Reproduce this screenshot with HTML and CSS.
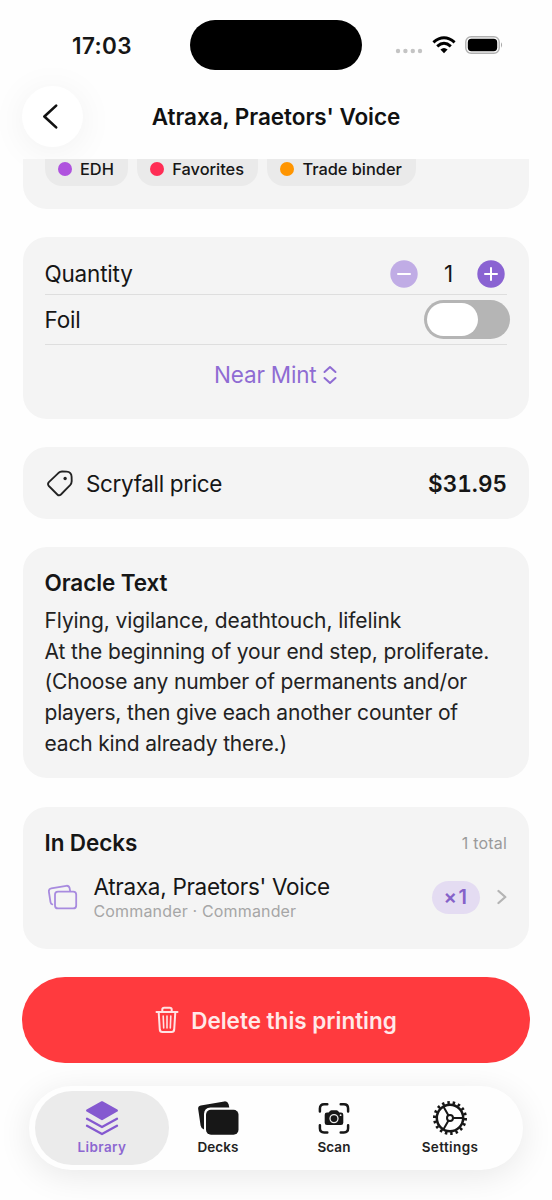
FILE: index.html
```html
<!DOCTYPE html>
<html lang="en">
<head>
<meta charset="utf-8">
<title>Atraxa, Praetors' Voice</title>
<link rel="stylesheet" href="styles.css">
</head>
<body>
<div class="screen">
  <header class="top">
    <div class="status">
      <span class="time">17:03</span>
      <span class="island"></span>
      <div class="indicators">
        <svg class="signal" width="28" height="6" viewBox="0 0 28 6" fill="#c4c4c4"><circle cx="3" cy="3" r="2.2"/><circle cx="10.4" cy="3" r="2.2"/><circle cx="17.8" cy="3" r="2.2"/><circle cx="25" cy="3" r="2.2"/></svg>
        <svg class="wifi" width="24" height="18" viewBox="0 0 24 18" fill="none" stroke="#000" stroke-width="3"><path d="M1.4 6.3Q12 -2.9 22.6 6.3"/><path d="M5.2 10.3Q12 4.3 18.8 10.3"/><path d="M8.4 13.6Q12 10.6 15.6 13.6L12 17.2Z" fill="#000" stroke="none"/></svg>
        <svg class="battery" width="38" height="18" viewBox="0 0 38 18"><rect x=".8" y=".8" width="33.4" height="16.4" rx="5.3" fill="none" stroke="#b0b0b0" stroke-width="1.4"/><rect x="2.8" y="2.8" width="29.4" height="12.4" rx="3.6"/><path d="M36 6.3q2.2 2.7 0 5.4z" fill="#aaa"/></svg>
      </div>
    </div>
    <div class="nav">
      <button class="back" aria-label="Back"><svg width="17" height="27" viewBox="0 0 18 28" fill="none" stroke="#111" stroke-width="2.8" stroke-linecap="round" stroke-linejoin="round"><path d="M15 2.5L2.5 14L15 25.5"/></svg></button>
      <h1 class="title">Atraxa, Praetors' Voice</h1>
    </div>
  </header>

  <main class="content">
    <section class="card tags">
      <span class="tag"><i class="dot purple"></i><span>EDH</span></span>
      <span class="tag"><i class="dot pink"></i><span>Favorites</span></span>
      <span class="tag"><i class="dot orange"></i><span>Trade binder</span></span>
    </section>

    <section class="card options">
      <div class="row quantity">
        <span class="label">Quantity</span>
        <div class="stepper">
          <svg width="28" height="28" viewBox="0 0 28 28"><circle cx="14" cy="14" r="13.7" fill="#c0ace5"/><path d="M8 14h12" stroke="#fff" stroke-width="2" stroke-linecap="round"/></svg>
          <span class="count">1</span>
          <svg width="28" height="28" viewBox="0 0 28 28"><circle cx="14" cy="14" r="13.7" fill="#8a63d2"/><path d="M8 14h12M14 8v12" stroke="#fff" stroke-width="2" stroke-linecap="round"/></svg>
        </div>
      </div>
      <div class="row foil">
        <span class="label">Foil</span>
        <span class="switch"><i class="knob"></i></span>
      </div>
      <div class="condition">
        <span>Near Mint</span>
        <svg width="14" height="20" viewBox="0 0 14 20" fill="none" stroke="#8f6cd3" stroke-width="2" stroke-linecap="round" stroke-linejoin="round"><path d="M1.5 7L7 2L12.5 7M1.5 13L7 18L12.5 13"/></svg>
      </div>
    </section>

    <section class="card price">
      <svg width="26" height="27" viewBox="0 0 28 28" preserveAspectRatio="none" fill="none" stroke="#222" stroke-width="2" stroke-linejoin="round"><path d="M2 12.6L12.2 3.2Q14 1.7 16.2 1.6L21.2 1.7Q26.3 2 26.5 7L26.6 11.5Q26.5 14 24.9 15.7L15 25.4Q13 27.2 11.1 25.4L2 16.6Q0.2 14.6 2 12.6Z"/><circle cx="19.5" cy="8.8" r="1.8" fill="#222" stroke="none"/></svg>
      <span class="scry">Scryfall price</span>
      <span class="amount">$31.95</span>
    </section>

    <section class="card oracle">
      <h2 class="heading">Oracle Text</h2>
      <p class="rules"><span class="keywords">Flying, vigilance, deathtouch, lifelink</span><br>At the beginning of your end step, proliferate.<br><span class="reminder">(Choose any number of permanents and/or<br>players, then give each another counter of<br>each kind already there.)</span></p>
    </section>

    <section class="card decks">
      <div class="decks-head">
        <h2 class="heading">In Decks</h2>
        <span class="total">1 total</span>
      </div>
      <div class="deck">
        <svg class="deck-icon" width="32" height="28" viewBox="0 0 32 28" fill="none" stroke="#a88bdf" stroke-width="1.8" stroke-linecap="round" stroke-linejoin="round"><rect x="7" y="8.6" width="21.2" height="16.8" rx="3"/><path d="M4.300 21.4Q2.800 21.1 2.500 19.2L.9 8.8Q.5 5.9 3.200 5.400L18.300 2.8Q20.900 2.500 21.600 5.100L22.100 8.200"/></svg>
        <div class="deck-text">
          <span class="deck-name">Atraxa, Praetors' Voice</span>
          <span class="deck-sub">Commander · Commander</span>
        </div>
        <span class="badge">×1</span>
        <svg class="chev" width="10" height="16" viewBox="0 0 10 16" fill="none" stroke="#b4b4b4" stroke-width="2.3" stroke-linecap="round" stroke-linejoin="round"><path d="M1.5 2L8.3 8L1.5 14"/></svg>
      </div>
    </section>

    <button class="delete">
      <svg width="24" height="28" viewBox="0 0 24 28" fill="none" stroke="#ffe3e4" stroke-width="2" stroke-linecap="round" stroke-linejoin="round"><path d="M1.5 6H22.5M7.3 5.8V3.6Q7.3 1.8 9.2 1.8H14.8Q16.7 1.8 16.7 3.6V5.8M3.7 6.2L4.8 23.7Q5 26 7.3 26H16.7Q19 26 19.2 23.7L20.3 6.2"/><path d="M8.2 10L8.7 22M12 10V22M15.8 10L15.3 22" stroke-width="1.6"/></svg>
      <span>Delete this printing</span>
    </button>
  </main>

  <nav class="tabbar">
    <a class="tab active">
      <svg width="36" height="36" viewBox="0 0 36 36" fill="none" stroke="#8559d0" stroke-width="2.3" stroke-linecap="round" stroke-linejoin="round"><path d="M18 2.3L32.8 10.6L18 19L3.2 10.6Z" fill="#8559d0"/><path d="M3 18.7L18 27L33 18.7M3 25.7L18 34L33 25.7"/></svg>
      <span class="wide">Library</span>
    </a>
    <a class="tab">
      <svg width="44" height="36" viewBox="0 0 44 36" fill="#171717"><path d="M2.2 9.3Q1.6 6.3 4.8 5.5L28.3 1.4Q31.5 1 32.6 4.2L33.3 7.6H14.5Q8.3 7.8 8 14V29.5Q5.2 28.8 4.6 25.5Z"/><rect x="10" y="9.8" width="32.5" height="25" rx="5"/></svg>
      <span>Decks</span>
    </a>
    <a class="tab">
      <svg width="36" height="36" viewBox="0 0 36 36" fill="none" stroke="#171717" stroke-width="2.5" stroke-linecap="round"><path d="M3.9 11.5V8.5Q3.9 4.3 8.1 4.3H11.3M24.7 4.3H27.9Q32.1 4.3 32.1 8.5V11.5M3.9 25.2V28.2Q3.9 32.4 8.1 32.4H11.3M24.7 32.4H27.9Q32.1 32.4 32.1 28.2V25.2"/><path d="M11 12.5H12.6L14 10.9Q14.6 10.3 15.5 10.3H20.5Q21.4 10.3 22 10.9L23.4 12.5H25Q27.3 12.5 27.3 14.8V22.8Q27.3 25.1 25 25.1H11Q8.700 25.1 8.700 22.8V14.8Q8.700 12.5 11 12.5Z" fill="#171717" stroke="none"/><circle cx="18" cy="18.6" r="4" stroke="#eee" stroke-width="1.3"/><circle cx="24.6" cy="15.2" r=".9" fill="#eee" stroke="none"/></svg>
      <span>Scan</span>
    </a>
    <a class="tab">
      <svg width="36" height="36" viewBox="0 0 36 36" fill="none" stroke="#171717"><circle cx="18" cy="18" r="15.5" stroke-width="3" pathLength="180" stroke-dasharray="4.6 5.4"/><circle cx="18" cy="18" r="13.2" stroke-width="2.5"/><circle cx="18" cy="18" r="3" stroke-width="2"/><path d="M21 18H31M16.500 15.400L11.500 6.700M16.500 20.600L11.500 29.300" stroke-width="2"/></svg>
      <span class="wide">Settings</span>
    </a>
  </nav>
</div>
</body>
</html>
```
FILE: styles.css
```css
* { box-sizing: border-box; }
body {
  margin: 0;
  background: #fefefe;
  color: #161616;
  font-family: Inter, "Liberation Sans", sans-serif;
  font-size: 22.5px;
  letter-spacing: -0.2px;
}
h1, h2, p { margin: 0; }
button { border: 0; padding: 0; font: inherit; letter-spacing: inherit; }
svg { display: block; flex: none; }
span { white-space: nowrap; }

.screen {
  position: relative;
  width: 552px;
  height: 1200px;
  overflow: hidden;
  display: flex;
  flex-direction: column;
}
.top { height: 159px; flex: none; }
.status {
  display: grid;
  grid-template-columns: 190px 172px 190px;
  padding-top: 20px;
  height: 86px;
}
.time {
  padding-left: 72px;
  line-height: 51px;
  font-size: 22.5px;
  font-weight: 600;
  letter-spacing: 0.4px;
}
.island { height: 50px; border-radius: 25px; background: #000; }
.indicators { display: flex; height: 50px; align-items: center; padding-left: 33px; }
.signal { margin-top: 12px; }
.wifi { margin-left: 9px; }
.battery { margin-left: 9px; }

.nav { display: grid; grid-template-columns: 61px 1fr 61px; padding: 0 22px; height: 61px; align-items: center; }
.back {
  width: 61px;
  height: 61px;
  border-radius: 50%;
  background: #fff;
  box-shadow: 0 4px 36px rgba(0, 0, 0, .06);
  display: flex;
  align-items: center;
  justify-content: center;
  padding: 0 4px 1px 0;
}
.title { text-align: center; font-size: 22.5px; font-weight: 600; letter-spacing: -0.05px; color: #111; }

.content {
  flex: 1;
  min-height: 0;
  padding: 0 23px;
  overflow: hidden;
  display: flex;
  flex-direction: column;
  gap: 28px;
}
.card { flex: none; background: #f4f4f4; border-radius: 24px; padding: 0 22px 0 21.5px; }

.tags { height: 50px; border-radius: 0 0 24px 24px; display: flex; gap: 9px; }
.tag {
  height: 27px;
  padding: 0 14px 8px 13.5px;
  border-radius: 0 0 17px 17px;
  background: #eaeaea;
  display: flex;
  align-items: center;
  gap: 8px;
  font-size: 16.4px;
  font-weight: 500;
  letter-spacing: -0.03px;
}
.dot { width: 14px; height: 14px; border-radius: 50%; }
.purple { background: #af52de; }
.pink { background: #ff2d55; }
.orange { background: #ff9500; }

.options { height: 182px; padding-top: 16px; }
.row { display: flex; justify-content: space-between; align-items: center; border-bottom: 1px solid #dedede; }
.quantity { height: 42px; }
.stepper { display: flex; align-items: center; padding-right: 2px; }
.count { width: 59px; padding-left: 2px; text-align: center; }
.foil { height: 50px; }
.switch { width: 86px; height: 39px; margin-right: -3px; border-radius: 20px; background: #b5b5b5; padding: 3px; }
.knob { display: block; width: 51px; height: 33px; border-radius: 17px; background: #fff; }
.condition { display: flex; align-items: center; justify-content: center; gap: 7px; height: 59px; color: #8f6cd3; }

.price { height: 72px; display: flex; align-items: center; padding-left: 24px; }
.scry { margin-left: 13px; letter-spacing: -0.35px; }
.amount { margin-left: auto; font-weight: 600; font-variant-numeric: tabular-nums; letter-spacing: 0; }

.oracle { height: 231px; padding-top: 21px; }
.heading { font-size: 22.5px; font-weight: 600; line-height: 30px; letter-spacing: -0.1px; }
.rules { padding-top: 8px; font-size: 21px; line-height: 30.7px; letter-spacing: -0.12px; color: #222; }
.keywords { letter-spacing: -0.09px; }
.reminder { letter-spacing: -0.17px; }

.decks { height: 142px; padding-top: 21px; margin-top: 0.5px; }
.decks-head { display: flex; justify-content: space-between; align-items: center; }
.total { font-size: 16px; letter-spacing: 0.2px; color: #9a9a9a; }
.deck { display: flex; align-items: center; padding-left: 3px; height: 58px; margin-top: 10.5px; }
.deck-text { display: flex; flex-direction: column; margin-left: 14px; padding-top: 3px; flex: 1; }
.deck-name { line-height: 26px; letter-spacing: -0.3px; }
.deck-sub { font-size: 16px; line-height: 23px; letter-spacing: 0.16px; color: #a6a6a6; }
.badge {
  width: 48px;
  height: 33px;
  border-radius: 17px;
  background: #e4dcf2;
  color: #8562c9;
  font-size: 20px;
  font-weight: 600;
  letter-spacing: 1.5px;
  line-height: 33px;
  text-align: center;
}
.chev { margin-left: 17px; }

.delete {
  flex: none;
  height: 86px;
  margin: 0 -1px;
  padding-top: 1px;
  border-radius: 43px;
  background: #ff3a3e;
  color: #ffe9e9;
  display: flex;
  align-items: center;
  justify-content: center;
  gap: 12px;
  font-weight: 600;
  letter-spacing: 0;
}

.tabbar {
  position: absolute;
  left: 29px;
  top: 1086px;
  width: 494px;
  height: 84px;
  padding: 5px 6px;
  border-radius: 42px;
  background: #fefefe;
  box-shadow: 0 6px 34px rgba(0, 0, 0, .09);
  display: flex;
}
.tab {
  flex: none;
  width: 134px;
  height: 74px;
  margin-right: -18px;
  padding-top: 9px;
  border-radius: 37px;
  display: flex;
  flex-direction: column;
  align-items: center;
  font-size: 13.5px;
  font-weight: 600;
  line-height: 22px;
  letter-spacing: 0.1px;
  color: #222;
}
.wide { letter-spacing: 0.4px; }
.active { background: #ebebeb; color: #8d67d1; }
```
